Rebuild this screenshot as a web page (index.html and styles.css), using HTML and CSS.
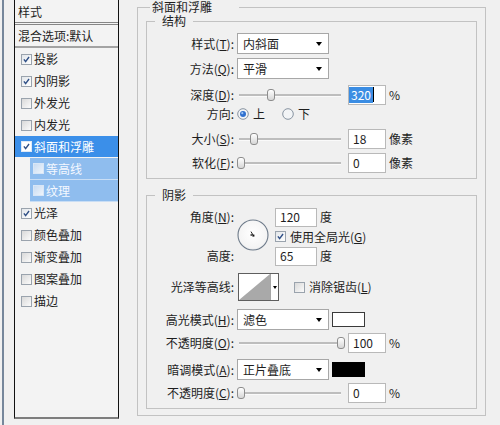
FILE: index.html
```html
<!DOCTYPE html>
<html lang="zh">
<head>
<meta charset="utf-8">
<title>图层样式</title>
<link rel="stylesheet" href="styles.css">
</head>
<body>
<div class="window">
  <div class="side">
    <div class="list">
      <div class="list-head">样式</div>
      <div class="list-blend">混合选项:默认</div>
      <div class="item"><span class="cb on"><svg viewBox="0 0 11 11"><path d="M2.3 5.4 L4.4 8 L8.6 2.4" /></svg></span>投影</div>
      <div class="item"><span class="cb on"><svg viewBox="0 0 11 11"><path d="M2.3 5.4 L4.4 8 L8.6 2.4" /></svg></span>内阴影</div>
      <div class="item"><span class="cb"></span>外发光</div>
      <div class="item"><span class="cb"></span>内发光</div>
      <div class="item sel"><span class="cb on white"><svg viewBox="0 0 11 11"><path d="M2.3 5.4 L4.4 8 L8.6 2.4" /></svg></span>斜面和浮雕</div>
      <div class="item sub"><span class="cb"></span>等高线</div>
      <div class="item sub"><span class="cb"></span>纹理</div>
      <div class="item"><span class="cb on"><svg viewBox="0 0 11 11"><path d="M2.3 5.4 L4.4 8 L8.6 2.4" /></svg></span>光泽</div>
      <div class="item"><span class="cb"></span>颜色叠加</div>
      <div class="item"><span class="cb"></span>渐变叠加</div>
      <div class="item"><span class="cb"></span>图案叠加</div>
      <div class="item"><span class="cb"></span>描边</div>
    </div>
  </div>

  <div class="main">
    <fieldset class="outer">
      <legend class="outer-title">斜面和浮雕</legend>

      <fieldset class="grp">
        <legend>结构</legend>
        <div class="row r1">
          <span class="lbl">样式(<u>T</u>):</span>
          <div class="dd"><span>内斜面</span><i class="arr"></i></div>
        </div>
        <div class="row r2">
          <span class="lbl">方法(<u>Q</u>):</span>
          <div class="dd"><span>平滑</span><i class="arr"></i></div>
        </div>
        <div class="row r3">
          <span class="lbl">深度(<u>D</u>):</span>
          <div class="slider"><span class="thumb" style="left:30px"></span></div>
          <div class="num"><span class="hl">320</span><span class="caret"></span></div>
          <span class="unit">%</span>
        </div>
        <div class="row r4">
          <span class="lbl">方向:</span>
          <span class="radio on"><svg viewBox="0 0 12 12"><circle cx="6" cy="6" r="5.3" class="ring"/><circle cx="6" cy="6" r="3" class="dot"/><circle cx="5.3" cy="5.2" r="1.1" class="glint"/></svg></span>
          <span class="rtext">上</span>
          <span class="radio"><svg viewBox="0 0 12 12"><circle cx="6" cy="6" r="5.3" class="ring"/></svg></span>
          <span class="rtext">下</span>
        </div>
        <div class="row r5">
          <span class="lbl">大小(<u>S</u>):</span>
          <div class="slider"><span class="thumb" style="left:13px"></span></div>
          <div class="num">18</div>
          <span class="unit">像素</span>
        </div>
        <div class="row r6">
          <span class="lbl">软化(<u>F</u>):</span>
          <div class="slider"><span class="thumb" style="left:0px"></span></div>
          <div class="num">0</div>
          <span class="unit">像素</span>
        </div>
      </fieldset>

      <fieldset class="grp shadow">
        <legend>阴影</legend>
        <div class="angle">
          <span class="lbl a-l1">角度(<u>N</u>):</span>
          <div class="dial">
            <svg viewBox="0 0 32 32" width="32" height="32">
              <defs>
                <radialGradient id="dg" cx="0.5" cy="0.45" r="0.6">
                  <stop offset="0" stop-color="#ffffff"/>
                  <stop offset="0.8" stop-color="#f4f4f4"/>
                  <stop offset="1" stop-color="#d9dde2"/>
                </radialGradient>
              </defs>
              <circle cx="16" cy="16" r="15" fill="url(#dg)" stroke="#6e7b8a" stroke-width="1.1"/>
              <path d="M16 16 L14 12.6" stroke="#222" stroke-width="1" fill="none"/>
              <path d="M13.3 16 H15.3 M14.3 15 V17" stroke="#333" stroke-width="0.8" fill="none"/>
              <rect x="15.4" y="15.6" width="2" height="2" fill="#111"/>
            </svg>
          </div>
          <div class="a-r1"><div class="num wide">120</div><span class="unit">度</span></div>
          <div class="a-r2"><span class="cb on"><svg viewBox="0 0 11 11"><path d="M2.3 5.4 L4.4 8 L8.6 2.4" /></svg></span><span class="cbtext">使用全局光(<u>G</u>)</span></div>
          <span class="lbl a-l3">高度:</span>
          <div class="a-r3"><div class="num wide">65</div><span class="unit">度</span></div>
        </div>
        <div class="row contour-row">
          <span class="lbl">光泽等高线:</span>
          <div class="contour">
            <svg class="ct-img" viewBox="0 0 31 26" width="31" height="26"><polygon points="0,26 31,0 31,26" fill="#a9a9a9"/></svg>
            <div class="ct-arrow"><i class="arr"></i></div>
          </div>
          <span class="cb aa"></span><span class="cbtext">消除锯齿(<u>L</u>)</span>
        </div>
        <div class="row s1">
          <span class="lbl">高光模式(<u>H</u>):</span>
          <div class="dd"><span>滤色</span><i class="arr"></i></div>
          <span class="swatch white"></span>
        </div>
        <div class="row s2">
          <span class="lbl">不透明度(<u>O</u>):</span>
          <div class="slider"><span class="thumb" style="left:100px"></span></div>
          <div class="num">100</div>
          <span class="unit">%</span>
        </div>
        <div class="row s3">
          <span class="lbl">暗调模式(<u>A</u>):</span>
          <div class="dd"><span>正片叠底</span><i class="arr"></i></div>
          <span class="swatch black"></span>
        </div>
        <div class="row s4">
          <span class="lbl">不透明度(<u>C</u>):</span>
          <div class="slider"><span class="thumb" style="left:0px"></span></div>
          <div class="num">0</div>
          <span class="unit">%</span>
        </div>
      </fieldset>
    </fieldset>
  </div>
</div>
</body>
</html>
```

FILE: styles.css
```css
* { box-sizing: border-box; }
html, body { margin: 0; padding: 0; }
body {
  width: 500px;
  height: 425px;
  overflow: hidden;
  background: #f0f0f0;
  font-family: "Noto Sans CJK SC", "Noto Sans", sans-serif;
  font-size: 12px;
  line-height: 14px;
  color: #1e1e1e;
}
u { text-decoration: underline; text-underline-offset: 1px; }

.window { display: flex; height: 425px; }

/* left style list */
.side {
  margin-left: 2px;
  border-left: 2px solid #76879b;
  padding-left: 10px;
  height: 425px;
}
.list {
  width: 105px;
  height: 419px;
  background: #f3f3f3;
  border-left: 1px solid #111;
  border-right: 1px solid #111;
  border-bottom: 2px solid #7d7d7d;
}
.list-head {
  height: 25px;
  padding: 5px 0 0 3px;
  border-bottom: 3px double #868686;
}
.list-blend {
  height: 23px;
  padding: 4px 0 0 3px;
  border-bottom: 2px solid #a3a3a3;
}
.item {
  height: 22px;
  display: flex;
  align-items: center;
  padding-left: 6px;
  gap: 2px;
  white-space: nowrap;
}
.item.sel { background: #3b8fe9; color: #fff; border-bottom: 1px solid #f3f3f3; }
.item.sub {
  margin-left: 15px;
  padding-left: 3px;
  background: #8fbdee;
  color: #f4f8ff;
  border-bottom: 1px solid #c9def5;
}

.cb {
  width: 11px;
  height: 11px;
  flex: none;
  border: 1px solid #9aa3ad;
  background: linear-gradient(135deg, #d9d9d9, #fbfbfb);
  display: inline-block;
}
.cb.on { background: linear-gradient(135deg, #e2e6ea, #ffffff); }
.cb.white { background: #fff; border-color: #dfe9f5; }
.cb svg { width: 9px; height: 9px; display: block; }
.cb svg path { stroke: #2f4f86; stroke-width: 1.7; fill: none; }
.item.sub .cb { border-color: #d8e6f6; background: linear-gradient(135deg, #c9dcf2, #eef4fb); }

/* right panel */
.main { margin-left: 18px; }
fieldset { min-width: 0; margin: 0; }
.outer {
  width: 349px;
  padding: 0 8px 6px;
  border: 1px solid #c2c2c2;
}
.outer-title {
  margin-left: 4px;
  padding: 0 27px 0 2px;
  line-height: 14px;
}
.grp {
  padding: 0 0 5px;
  border: 1px solid #c2c2c2;
}
.grp legend {
  margin-left: 8px;
  padding: 0 7px;
  line-height: 14px;
}
.shadow { margin-top: 9px; }

.row { display: flex; align-items: center; height: 21px; }
.lbl {
  width: 87px;
  margin-right: 3px;
  flex: none;
  text-align: right;
  white-space: nowrap;
}
.r1 { margin-top: 5px; }
.r2 { margin-top: 4px; }
.r3 { margin-top: 5px; }
.r4 { margin-top: 2px; height: 14px; }
.r5 { margin-top: 7px; }
.r6 { margin-top: 3px; }

.dd {
  width: 92px;
  height: 21px;
  background: #fff;
  border: 1px solid #a7a7a7;
  display: flex;
  align-items: center;
  justify-content: space-between;
  padding: 0 6px 0 5px;
}
.arr {
  width: 0;
  height: 0;
  border-left: 3.5px solid transparent;
  border-right: 3.5px solid transparent;
  border-top: 4px solid #000;
}

.slider {
  position: relative;
  width: 107px;
  height: 12px;
  flex: none;
}
.slider::before {
  content: "";
  position: absolute;
  left: 2px;
  right: 3px;
  top: 5px;
  height: 2px;
  background: #bdbdbd;
  box-shadow: 0 1px 0 #fafafa;
}
.thumb {
  position: absolute;
  top: 0;
  width: 8px;
  height: 12px;
  border: 1px solid #8d8d8d;
  border-radius: 3px 3px 3px 3px;
  background: linear-gradient(#ffffff, #d6d6d6);
}

.num {
  width: 38px;
  height: 20px;
  margin-left: 4px;
  flex: none;
  background: #fff;
  border: 1px solid #b9b9b9;
  padding-left: 4px;
  line-height: 18px;
  display: flex;
  align-items: center;
}
.hl { background: #3b8de3; color: #fff; margin-left: -4px; padding: 0 2px 0 2px; line-height: 16px; }
.caret { width: 1px; height: 15px; background: #000; }
.unit { margin-left: 3px; }

.radio { width: 12px; height: 12px; flex: none; }
.radio svg { width: 12px; height: 12px; display: block; }
.radio .ring { fill: #f2f4f6; stroke: #8793a1; stroke-width: 1; }
.radio .dot { fill: #2f70cf; }
.radio .glint { fill: #9cc3f2; }
.rtext { margin-left: 4px; }
.radio + .rtext + .radio { margin-left: 17px; }

/* angle block */
.angle {
  margin-top: 5px;
  display: grid;
  grid-template-columns: 87px 41px auto;
  grid-template-rows: 20px 19px 20px;
  column-gap: 0;
}
.angle .lbl { align-self: center; }
.a-l1 { grid-column: 1; grid-row: 1; }
.a-l3 { grid-column: 1; grid-row: 3; }
.dial { grid-column: 2; grid-row: 1 / 4; align-self: center; margin-left: 3px; margin-top: -4px; height: 32px; }
.dial svg { display: block; }
.a-r1, .a-r2, .a-r3 { grid-column: 3; display: flex; align-items: center; }
.a-r1 { grid-row: 1; }
.a-r2 { grid-row: 2; }
.a-r3 { grid-row: 3; }
.num.wide { width: 42px; margin-left: 0; height: 19px; }
.cbtext { margin-left: 4px; white-space: nowrap; }

.contour-row { margin-top: 7px; height: 28px; }
.contour {
  display: flex;
  height: 28px;
  margin-left: 1px;
  border: 1px solid #5e5e5e;
  background: #fff;
}
.ct-img { display: block; }
.ct-arrow {
  width: 8px;
  border-left: 1px solid #a6a6a6;
  display: flex;
  align-items: center;
  justify-content: center;
}
.ct-arrow .arr { border-left-width: 2.5px; border-right-width: 2.5px; border-top-width: 3px; }
.cb.aa { margin-left: 15px; }

.s1 { margin-top: 8px; }
.s2 { margin-top: 3px; height: 20px; }
.s3 { margin-top: 6px; }
.s4 { margin-top: 3px; height: 20px; }

.swatch { width: 33px; height: 15px; margin-left: 3px; flex: none; }
.swatch.white { background: #fff; border: 1px solid #3a3a3a; }
.swatch.black { background: #000; }
```
